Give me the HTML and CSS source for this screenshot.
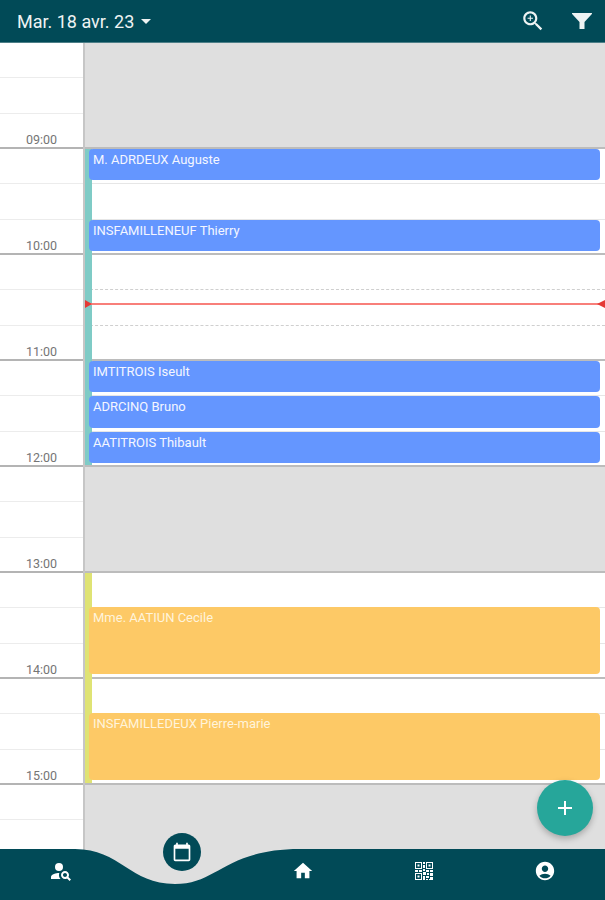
FILE: index.html
```html
<!DOCTYPE html>
<html lang="fr">
<head>
  <meta charset="UTF-8" />
  <meta name="viewport" content="width=device-width, initial-scale=1" />
  <title>Agenda</title>
  <link rel="stylesheet" href="styles.css">
</head>
<body>
  <div class="app">
    <header class="topbar">
      <div class="date-picker">
        <span>Mar. 18 avr. 23</span>
        <span class="caret"></span>
      </div>
      <div class="topbar-actions">
        <svg class="icon-zoom" viewBox="0 0 24 24"><path d="M15.5 14h-.79l-.28-.27C15.41 12.59 16 11.11 16 9.5 16 5.91 13.09 3 9.5 3S3 5.91 3 9.5 5.91 16 9.5 16c1.61 0 3.09-.59 4.23-1.57l.27.28v.79l5 4.99L20.49 19l-4.99-5zm-6 0C7.01 14 5 11.99 5 9.5S7.01 5 9.5 5 14 7.01 14 9.5 11.99 14 9.5 14z"/><path d="M12 10h-2v2H9v-2H7V9h2V7h1v2h2v1z"/></svg>
        <svg class="icon-filter" viewBox="0 0 24 24"><path d="M2.5 4h19c.5 0 .7.5.4.9L14.5 13v7h-5v-7L2.1 4.9c-.3-.4-.1-.9.4-.9z"/></svg>
      </div>
    </header>

    <main class="agenda">
      <div class="times">
        <div class="hour"><span>09:00</span></div>
        <div class="hour"><span>10:00</span></div>
        <div class="hour"><span>11:00</span></div>
        <div class="hour"><span>12:00</span></div>
        <div class="hour"><span>13:00</span></div>
        <div class="hour"><span>14:00</span></div>
        <div class="hour"><span>15:00</span></div>
        <div class="hour"><span>16:00</span></div>
      </div>

      <div class="day">
        <div class="lines">
          <div class="slot"></div><div class="slot"></div><div class="slot"></div>
          <div class="slot"></div><div class="slot"></div><div class="slot"></div>
          <div class="slot"></div><div class="slot"></div><div class="slot"></div>
          <div class="slot"></div><div class="slot"></div><div class="slot"></div>
          <div class="slot"></div><div class="slot"></div><div class="slot"></div>
          <div class="slot"></div><div class="slot"></div><div class="slot"></div>
          <div class="slot"></div><div class="slot"></div><div class="slot"></div>
          <div class="slot"></div><div class="slot"></div><div class="slot"></div>
        </div>

        <div class="closed closed-morning"></div>
        <div class="closed closed-noon"></div>
        <div class="closed closed-evening"></div>

        <div class="strip strip-teal"></div>
        <div class="strip strip-yellow"></div>

        <div class="event blue ev-1">M. ADRDEUX Auguste</div>
        <div class="event blue ev-2">INSFAMILLENEUF Thierry</div>
        <div class="event blue ev-3">IMTITROIS Iseult</div>
        <div class="event blue ev-4">ADRCINQ Bruno</div>
        <div class="event blue ev-5">AATITROIS Thibault</div>
        <div class="event orange ev-6">Mme. AATIUN Cecile</div>
        <div class="event orange ev-7">INSFAMILLEDEUX Pierre-marie</div>

        <div class="now-line"></div>
      </div>
    </main>

    <button class="fab">
      <svg viewBox="0 0 24 24"><path d="M19 13h-6v6h-2v-6H5v-2h6V5h2v6h6v2z"/></svg>
    </button>

    <nav class="bottom-nav">
      <svg class="nav-shape" viewBox="0 0 605 52" preserveAspectRatio="none"><path d="M0 1H75C120 1 130 36 175 36C218 36 225 1 300 1H605V52H0Z"/></svg>
      <div class="nav-items">
        <div class="nav-item">
          <svg class="icon-large" viewBox="0 0 24 24"><circle cx="10" cy="8" r="4"/><path d="M10.35 14.01C7.62 13.91 2 15.27 2 18v2h9.54c-2.47-2.76-1.23-5.89-1.19-5.99zM19.43 18.02c.36-.59.57-1.28.57-2.02 0-2.21-1.79-4-4-4s-4 1.79-4 4 1.79 4 4 4c.74 0 1.43-.22 2.02-.57L20.59 22 22 20.59l-2.57-2.57zM16 18c-1.1 0-2-.9-2-2s.9-2 2-2 2 .9 2 2-.9 2-2 2z"/></svg>
        </div>
        <div class="nav-item">
          <div class="nav-calendar">
            <svg viewBox="0 0 24 24"><path d="M20 3h-1V1h-2v2H7V1H5v2H4c-1.1 0-2 .9-2 2v16c0 1.1.9 2 2 2h16c1.1 0 2-.9 2-2V5c0-1.1-.9-2-2-2zm0 18H4V8h16v13z"/></svg>
          </div>
        </div>
        <div class="nav-item">
          <svg viewBox="0 0 24 24"><path d="M10 20v-6h4v6h5v-8h3L12 3 2 12h3v8z"/></svg>
        </div>
        <div class="nav-item">
          <svg class="icon-large qr" viewBox="0 0 24 24"><path d="M3 3h7v7H3zM4 4v5h5V4zM5.5 5.5h2v2h-2zM14 3h7v7h-7zM15 4v5h5V4zM16.5 5.5h2v2h-2zM3 14h7v7H3zM4 15v5h5v-5zM5.5 16.5h2v2h-2zM11 3h2v2h-2zM11 6h2v3h-2zM11 10h2v2h-2zM3 11h3v2H3zM7 11h3v2H7zM14 11h3v2h-3zM18 11h3v2h-3zM11 13h3v3h-3zM15 14h2v2h-2zM18 14h3v3h-3zM11 17h2v4h-2zM14 17h3v2h-3zM14 20h2v1h-2zM18 18h3v3h-4v-1h1z"/></svg>
        </div>
        <div class="nav-item">
          <svg viewBox="0 0 24 24"><path d="M12 2C6.48 2 2 6.48 2 12s4.48 10 10 10 10-4.48 10-10S17.52 2 12 2zm0 4c1.93 0 3.5 1.57 3.5 3.5S13.93 13 12 13s-3.5-1.57-3.5-3.5S10.07 6 12 6zm0 14c-2.03 0-4.43-.82-6.14-2.88C7.55 15.8 9.68 15 12 15s4.45.8 6.14 2.12C16.43 19.18 14.03 20 12 20z"/></svg>
        </div>
      </div>
    </nav>
  </div>
</body>
</html>
```

FILE: styles.css
```css
* {
  box-sizing: border-box;
}
html, body {
  margin: 0;
  height: 100%;
  overflow: hidden;
}
body {
  font-family: Roboto, "Liberation Sans", sans-serif;
  background-color: #fff;
}
svg {
  display: block;
  fill: currentColor;
}
.app {
  position: relative;
  display: flex;
  flex-direction: column;
  height: 900px;
  overflow: hidden;
}

/* top bar */
.topbar {
  display: flex;
  flex: none;
  align-items: center;
  justify-content: space-between;
  height: 43px;
  padding: 0 11px 0 17px;
  background-color: #014a57;
  border-bottom: 1px solid #4d7f88;
  color: #eef3f3;
}
.date-picker {
  display: flex;
  align-items: center;
  gap: 7px;
  font-size: 18px;
}
.caret {
  width: 0;
  height: 0;
  border-left: 5px solid transparent;
  border-right: 5px solid transparent;
  border-top: 5px solid #eef3f3;
}
.topbar-actions {
  display: flex;
  align-items: center;
  gap: 24px;
}
.icon-zoom {
  width: 26px;
  height: 26px;
}
.icon-filter {
  width: 24px;
  height: 24px;
}

/* agenda grid */
.agenda {
  display: grid;
  flex: 1;
  grid-template-columns: 85px 1fr;
  min-height: 0;
}
.times {
  border-right: 2px solid #c6c6c6;
}
.hour {
  display: flex;
  align-items: flex-end;
  justify-content: center;
  height: 106px;
  border-bottom: 2px solid #b4b4b4;
  background-image:
    linear-gradient(#ececec, #ececec),
    linear-gradient(#ececec, #ececec);
  background-repeat: no-repeat;
  background-size: 100% 1px;
  background-position: 0 34px, 0 70px;
  color: #757575;
  font-size: 12.5px;
  line-height: 14px;
}
.day {
  display: grid;
  grid-template-columns: 4px 3px 1fr 5px;
  grid-template-rows: repeat(24, 35.333px);
}
.lines {
  grid-row: 1 / -1;
  grid-column: 1 / -1;
}
.slot {
  height: 35.333px;
  border-bottom: 1px solid #e6e6e6;
}
.slot:nth-child(3n) {
  border-bottom: 2px solid #bcbcbc;
}
.slot:nth-child(7),
.slot:nth-child(8) {
  border-bottom: 1px dashed #cfcfcf;
}
.closed {
  grid-column: 1 / -1;
  margin-bottom: 2px;
  background-color: #dfdfdf;
}
.closed-morning {
  grid-row: 1 / span 3;
}
.closed-noon {
  grid-row: 13 / span 3;
}
.closed-evening {
  grid-row: 22 / span 3;
}
.strip {
  grid-column: 1 / span 2;
  margin-bottom: 2px;
}
.strip-teal {
  grid-row: 4 / span 9;
  background-color: #7fcbc6;
}
.strip-yellow {
  grid-row: 16 / span 6;
  background-color: #dfe374;
}

/* appointments */
.event {
  grid-column: 2 / span 2;
  margin-bottom: 4px;
  padding: 4px 0 0 4px;
  border-radius: 4px;
  color: #f4f6ff;
  font-size: 13px;
  line-height: 14px;
}
.blue {
  background-color: #6496ff;
}
.orange {
  margin-top: -1px;
  margin-bottom: 5px;
  background-color: #fdc966;
  color: #fff4dc;
}
.ev-1 { grid-row: 4; }
.ev-2 { grid-row: 6; }
.ev-3 { grid-row: 10; }
.ev-4 { grid-row: 11; }
.ev-5 { grid-row: 12; }
.ev-6 { grid-row: 17 / span 2; }
.ev-7 { grid-row: 20 / span 2; }

/* current time marker */
.now-line {
  position: relative;
  grid-row: 8;
  grid-column: 1 / -1;
  height: 2px;
  margin-top: 13px;
  background-color: #f87f7a;
}
.now-line::before,
.now-line::after {
  content: "";
  position: absolute;
  top: -3.5px;
  border-top: 4.5px solid transparent;
  border-bottom: 4.5px solid transparent;
}
.now-line::before {
  left: 0;
  border-left: 7px solid #e53935;
}
.now-line::after {
  right: 0;
  border-right: 8px solid #e53935;
}

/* floating add button */
.fab {
  position: absolute;
  left: 537px;
  top: 780px;
  display: flex;
  align-items: center;
  justify-content: center;
  width: 56px;
  height: 56px;
  padding: 0;
  border: none;
  border-radius: 50%;
  background-color: #26a69a;
  box-shadow: 0 3px 6px rgba(0, 0, 0, 0.25);
  color: #fff;
}
.fab svg {
  width: 24px;
  height: 24px;
}

/* bottom navigation */
.bottom-nav {
  position: absolute;
  left: 0;
  right: 0;
  bottom: 0;
  height: 52px;
  color: #fff;
}
.nav-shape {
  position: absolute;
  inset: 0;
  width: 100%;
  height: 100%;
  fill: #014a57;
}
.nav-items {
  position: relative;
  display: grid;
  grid-template-columns: repeat(5, 1fr);
  height: 46px;
}
.nav-item {
  display: flex;
  align-items: center;
  justify-content: center;
  height: 46px;
}
.nav-item svg {
  width: 22px;
  height: 22px;
}
.nav-item .icon-large {
  width: 24px;
  height: 24px;
}
.qr {
  fill-rule: evenodd;
}
.nav-calendar {
  display: flex;
  align-items: center;
  justify-content: center;
  width: 38px;
  height: 38px;
  margin-top: -38px;
  border-radius: 50%;
  background-color: #014a57;
}
.nav-item .nav-calendar svg {
  width: 20px;
  height: 20px;
}
```
